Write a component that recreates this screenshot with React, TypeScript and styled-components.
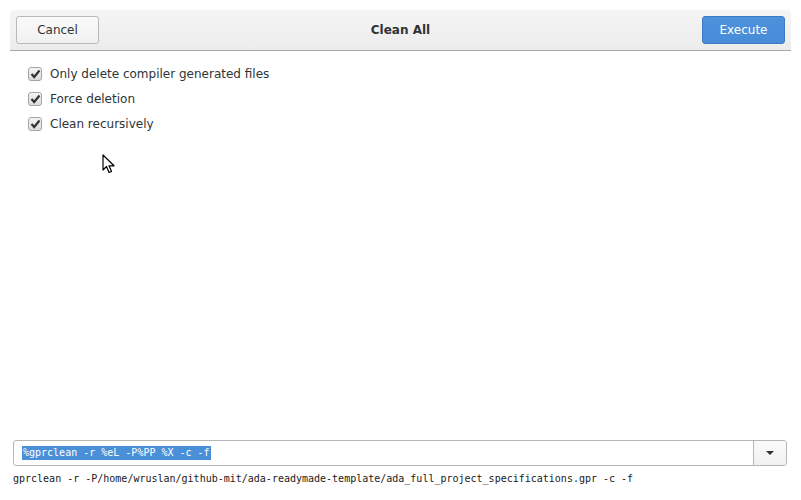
import React from "react";
import styled, { createGlobalStyle } from "styled-components";

const Global = createGlobalStyle`
  html, body { margin: 0; padding: 0; background: #ffffff; }
  body { font-family: "DejaVu Sans", sans-serif; color: #2e3436; }
`;

const Page = styled.div`
  position: relative;
  width: 801px;
  height: 500px;
  display: flex;
  flex-direction: column;
  background: #ffffff;
  overflow: hidden;
`;

const HeaderBar = styled.div`
  margin: 10px 10px 0 10px;
  height: 40px;
  box-sizing: content-box;
  border-bottom: 1px solid #a9a9a9;
  background: linear-gradient(to bottom, #f5f5f5, #ececec);
  border-radius: 4px 4px 0 0;
  display: flex;
  align-items: center;
  justify-content: space-between;
  padding: 0 6px;
`;

const Button = styled.button<{ $primary?: boolean }>`
  width: 83px;
  height: 28px;
  box-sizing: border-box;
  border-radius: 3px;
  font-family: "DejaVu Sans", sans-serif;
  font-size: 12px;
  cursor: default;
  padding: 0;
  border: 1px solid ${(p) => (p.$primary ? "#3b7bc4" : "#b9b9b9")};
  color: ${(p) => (p.$primary ? "#ffffff" : "#2e3436")};
  background: ${(p) =>
    p.$primary
      ? "linear-gradient(to bottom, #4d92dc, #468cd8)"
      : "linear-gradient(to bottom, #fafafa, #f1f1f1)"};
`;

const Title = styled.div`
  font-size: 12px;
  font-weight: bold;
  color: #2e3436;
`;

const Options = styled.div`
  display: flex;
  flex-direction: column;
  gap: 11px;
  padding: 16px 0 0 28px;
  flex: 1;
`;

const OptionRow = styled.label`
  display: flex;
  align-items: center;
  gap: 8px;
  height: 14px;
  font-size: 12px;
  color: #2e3436;
`;

const Box = styled.span`
  width: 14px;
  height: 14px;
  box-sizing: border-box;
  border: 1px solid #a4a4a4;
  border-radius: 3px;
  background: linear-gradient(to bottom, #f4f4f4, #dcdcdc);
  display: flex;
  align-items: center;
  justify-content: center;
`;

const Bottom = styled.div`
  padding: 0 14px 0 13px;
  display: flex;
  flex-direction: column;
  gap: 6px;
  margin-bottom: 14px;
`;

const Combo = styled.div`
  height: 26px;
  box-sizing: border-box;
  border: 1px solid #b6b6b6;
  border-radius: 3px;
  display: flex;
  background: #ffffff;
`;

const ComboEntry = styled.div`
  flex: 1;
  display: flex;
  align-items: center;
  padding-left: 8px;
`;

const Selected = styled.span`
  font-family: "DejaVu Sans Mono", monospace;
  font-size: 10px;
  line-height: 14px;
  background: #4a90d9;
  color: #ffffff;
  padding: 0 1px;
`;

const ComboButton = styled.div`
  width: 32px;
  border-left: 1px solid #b6b6b6;
  background: linear-gradient(to bottom, #fafafa, #f1f1f1);
  border-radius: 0 2px 2px 0;
  display: flex;
  align-items: center;
  justify-content: center;
`;

const Output = styled.div`
  font-family: "DejaVu Sans Mono", monospace;
  font-size: 10px;
  color: #1a1a1a;
  line-height: 14px;
  white-space: pre;
`;

const Cursor = styled.svg`
  position: absolute;
  left: 102px;
  top: 154px;
`;

const Check = () => (
  <svg width="11" height="10" viewBox="0 0 11 10">
    <path d="M1.5 5 L4.2 8 L9.5 1.5" fill="none" stroke="#2e3436" strokeWidth="2.2" />
  </svg>
);

const options = [
  "Only delete compiler generated files",
  "Force deletion",
  "Clean recursively",
];

export default function App() {
  return (
    <Page>
      <Global />
      <HeaderBar>
        <Button>Cancel</Button>
        <Title>Clean All</Title>
        <Button $primary>Execute</Button>
      </HeaderBar>
      <Options>
        {options.map((o) => (
          <OptionRow key={o}>
            <Box>
              <Check />
            </Box>
            {o}
          </OptionRow>
        ))}
      </Options>
      <Bottom>
        <Combo>
          <ComboEntry>
            <Selected>%gprclean -r %eL -P%PP %X -c -f</Selected>
          </ComboEntry>
          <ComboButton>
            <svg width="10" height="6" viewBox="0 0 10 6">
              <path d="M1 1 L9 1 L5 5 Z" fill="#2e3436" />
            </svg>
          </ComboButton>
        </Combo>
        <Output>gprclean -r -P/home/wruslan/github-mit/ada-readymade-template/ada_full_project_specifications.gpr -c -f</Output>
      </Bottom>
      <Cursor width="14" height="22" viewBox="0 0 14 22">
        <path
          d="M1 1 L1 16 L4.5 12.5 L7 18.5 L9.5 17.5 L7 11.8 L12 11.8 Z"
          fill="#ffffff"
          stroke="#000000"
          strokeWidth="1.2"
          strokeLinejoin="round"
        />
      </Cursor>
    </Page>
  );
}
